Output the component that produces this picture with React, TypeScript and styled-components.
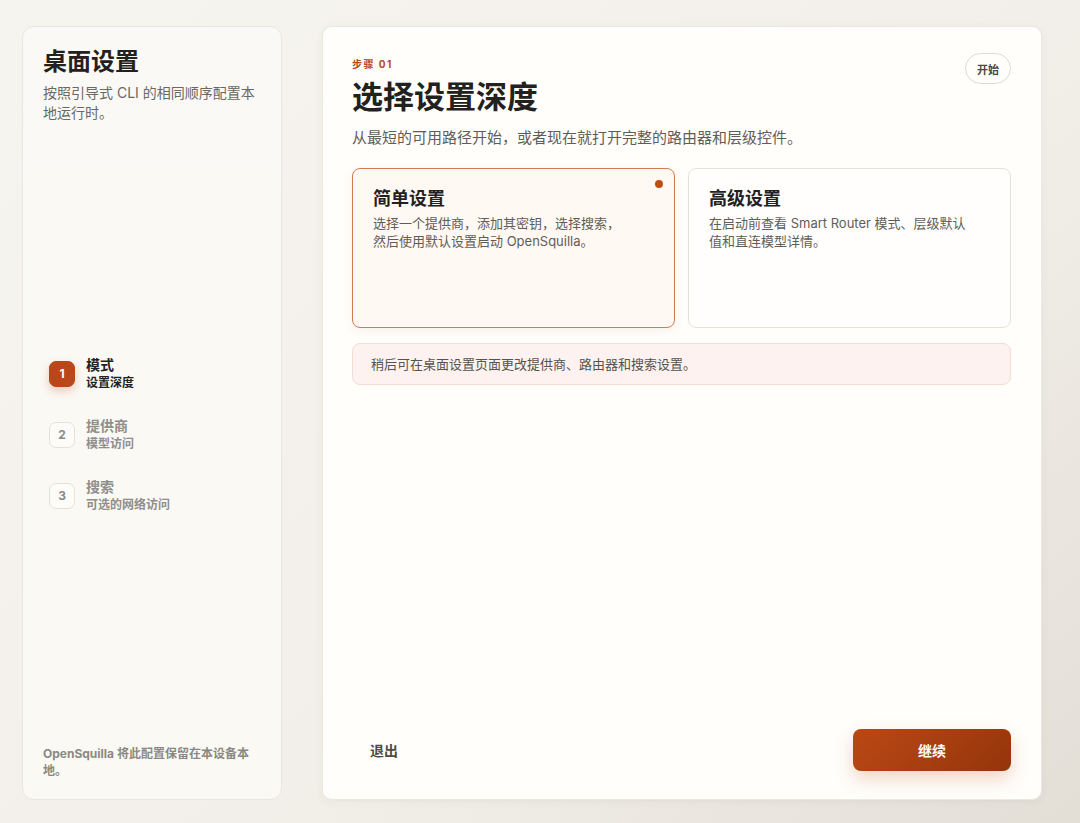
import styled, { createGlobalStyle } from 'styled-components';

const GlobalStyle = createGlobalStyle`
  html, body {
    margin: 0;
    padding: 0;
    height: 100%;
  }
  body {
    font-family: Inter, "Noto Sans CJK SC", "Liberation Sans", sans-serif;
    background: linear-gradient(135deg, #f6f4ef 0%, #f2efe9 60%, #e3dfd7 100%);
    color: #262421;
  }
  #root {
    height: 100%;
  }
`;

const steps = [
  { n: 1, title: '模式', sub: '设置深度' },
  { n: 2, title: '提供商', sub: '模型访问' },
  { n: 3, title: '搜索', sub: '可选的网络访问' },
];

export default function App() {
  return (
    <>
      <GlobalStyle />
      <Shell>
        <Sidebar>
          <SideTitle>桌面设置</SideTitle>
          <SideText>按照引导式 CLI 的相同顺序配置本地运行时。</SideText>
          <StepList>
            {steps.map((s) => (
              <Step key={s.n}>
                <StepBadge $active={s.n === 1}>{s.n}</StepBadge>
                <StepLabel $active={s.n === 1}>
                  <StepTitle>{s.title}</StepTitle>
                  <StepSub>{s.sub}</StepSub>
                </StepLabel>
              </Step>
            ))}
          </StepList>
          <SideFoot>OpenSquilla 将此配置保留在本设备本地。</SideFoot>
        </Sidebar>

        <Main>
          <Header>
            <div>
              <Eyebrow>步骤 01</Eyebrow>
              <Title>选择设置深度</Title>
            </div>
            <PillButton>开始</PillButton>
          </Header>
          <Lead>从最短的可用路径开始，或者现在就打开完整的路由器和层级控件。</Lead>

          <Options>
            <OptionCard $selected>
              <Dot />
              <OptionTitle>简单设置</OptionTitle>
              <OptionText>
                选择一个提供商，添加其密钥，选择搜索，
                <br />
                然后使用默认设置启动 OpenSquilla。
              </OptionText>
            </OptionCard>
            <OptionCard>
              <OptionTitle>高级设置</OptionTitle>
              <OptionText>
                在启动前查看 Smart Router 模式、层级默认
                <br />
                值和直连模型详情。
              </OptionText>
            </OptionCard>
          </Options>

          <Note>稍后可在桌面设置页面更改提供商、路由器和搜索设置。</Note>

          <Footer>
            <GhostButton>退出</GhostButton>
            <PrimaryButton>继续</PrimaryButton>
          </Footer>
        </Main>
      </Shell>
    </>
  );
}

const Shell = styled.div`
  display: grid;
  grid-template-columns: 260px 720px;
  gap: 40px;
  padding: 26px 22px 23px 22px;
  height: 823px;
  box-sizing: border-box;
`;

const Sidebar = styled.aside`
  display: flex;
  flex-direction: column;
  background: linear-gradient(180deg, #faf9f5 0%, #fbf9f4 100%);
  border: 1px solid #e9e6df;
  border-radius: 12px;
  padding: 19px 20px 20px 20px;
  box-sizing: border-box;
`;

const SideTitle = styled.h1`
  margin: 0;
  font-size: 24px;
  font-weight: 700;
  line-height: 32px;
  color: #23211e;
`;

const SideText = styled.p`
  margin: 5px 0 0;
  font-size: 14px;
  line-height: 20px;
  color: #6a6863;
`;

const StepList = styled.div`
  display: flex;
  flex-direction: column;
  gap: 24px;
  margin-top: 232px;
  padding-left: 6px;
`;

const Step = styled.div`
  display: flex;
  align-items: center;
  gap: 11px;
`;

const StepBadge = styled.div<{ $active?: boolean }>`
  width: 26px;
  height: 26px;
  border-radius: 7px;
  display: flex;
  align-items: center;
  justify-content: center;
  font-size: 12px;
  font-weight: 700;
  box-sizing: border-box;
  color: ${(p) => (p.$active ? '#fff' : '#8c8a85')};
  background: ${(p) => (p.$active ? '#b9471a' : '#fdfcf9')};
  border: 1px solid ${(p) => (p.$active ? '#b9471a' : '#e4e1da')};
  box-shadow: ${(p) => (p.$active ? '0 4px 10px rgba(190, 80, 30, 0.28)' : 'none')};
`;

const StepLabel = styled.div<{ $active?: boolean }>`
  display: flex;
  flex-direction: column;
  color: ${(p) => (p.$active ? '#24221f' : '#908e89')};
`;

const StepTitle = styled.span`
  font-size: 14px;
  font-weight: 700;
  line-height: 19px;
`;

const StepSub = styled.span`
  font-size: 12px;
  font-weight: 700;
  line-height: 18px;
`;

const SideFoot = styled.p`
  margin: auto 0 0;
  font-size: 12px;
  font-weight: 700;
  line-height: 17px;
  color: #8a8883;
`;

const Main = styled.main`
  display: flex;
  flex-direction: column;
  background: #fffefb;
  border: 1px solid #ece9e3;
  border-radius: 10px;
  padding: 30px 30px 28px 29px;
  box-sizing: border-box;
  box-shadow: 0 2px 10px rgba(60, 50, 30, 0.05);
`;

const Header = styled.div`
  display: flex;
  justify-content: space-between;
  align-items: flex-start;
`;

const Eyebrow = styled.div`
  font-size: 10px;
  font-weight: 700;
  letter-spacing: 1.5px;
  color: #b9471a;
  line-height: 14px;
`;

const Title = styled.h2`
  margin: 7px 0 0;
  font-size: 31px;
  font-weight: 700;
  line-height: 38px;
  color: #23211e;
`;

const PillButton = styled.button`
  margin-top: -4px;
  height: 31px;
  padding: 0 11px;
  border-radius: 16px;
  border: 1px solid #dedbd5;
  background: #fffefb;
  font-family: inherit;
  font-size: 11px;
  font-weight: 700;
  color: #4a4844;
`;

const Lead = styled.p`
  margin: 11px 0 0;
  font-size: 15px;
  line-height: 22px;
  color: #5f5d58;
`;

const Options = styled.div`
  display: grid;
  grid-template-columns: 1fr 1fr;
  gap: 13px;
  margin-top: 19px;
`;

const OptionCard = styled.div<{ $selected?: boolean }>`
  position: relative;
  height: 160px;
  box-sizing: border-box;
  padding: 18px 20px;
  border-radius: 8px;
  border: 1px solid ${(p) => (p.$selected ? '#cf7c55' : '#e5e2dc')};
  background: ${(p) => (p.$selected ? '#fff8f3' : '#fffefc')};
  box-shadow: ${(p) => (p.$selected ? '0 3px 10px rgba(190, 90, 40, 0.08)' : 'none')};
`;

const Dot = styled.span`
  position: absolute;
  top: 11px;
  right: 11px;
  width: 8px;
  height: 8px;
  border-radius: 50%;
  background: #c04d18;
`;

const OptionTitle = styled.h3`
  margin: 0;
  font-size: 18px;
  font-weight: 700;
  line-height: 24px;
  color: #23211e;
`;

const OptionText = styled.p`
  margin: 3px 0 0;
  font-size: 13px;
  line-height: 18px;
  color: #5f5d58;
`;

const Note = styled.div`
  margin-top: 15px;
  padding: 11px 18px;
  border-radius: 8px;
  border: 1px solid #f5dcd5;
  background: #fdf2ef;
  font-size: 13px;
  line-height: 18px;
  color: #55534e;
`;

const Footer = styled.div`
  margin-top: auto;
  display: flex;
  justify-content: space-between;
  align-items: center;
`;

const GhostButton = styled.button`
  border: none;
  background: none;
  padding: 0 18px;
  font-family: inherit;
  font-size: 14px;
  font-weight: 700;
  color: #4d4b47;
`;

const PrimaryButton = styled.button`
  width: 158px;
  height: 42px;
  border: none;
  border-radius: 8px;
  background: linear-gradient(135deg, #bb4815 0%, #94350a 100%);
  color: #fff;
  font-family: inherit;
  font-size: 14px;
  font-weight: 700;
  box-shadow: 0 8px 18px rgba(200, 90, 40, 0.25);
`;
